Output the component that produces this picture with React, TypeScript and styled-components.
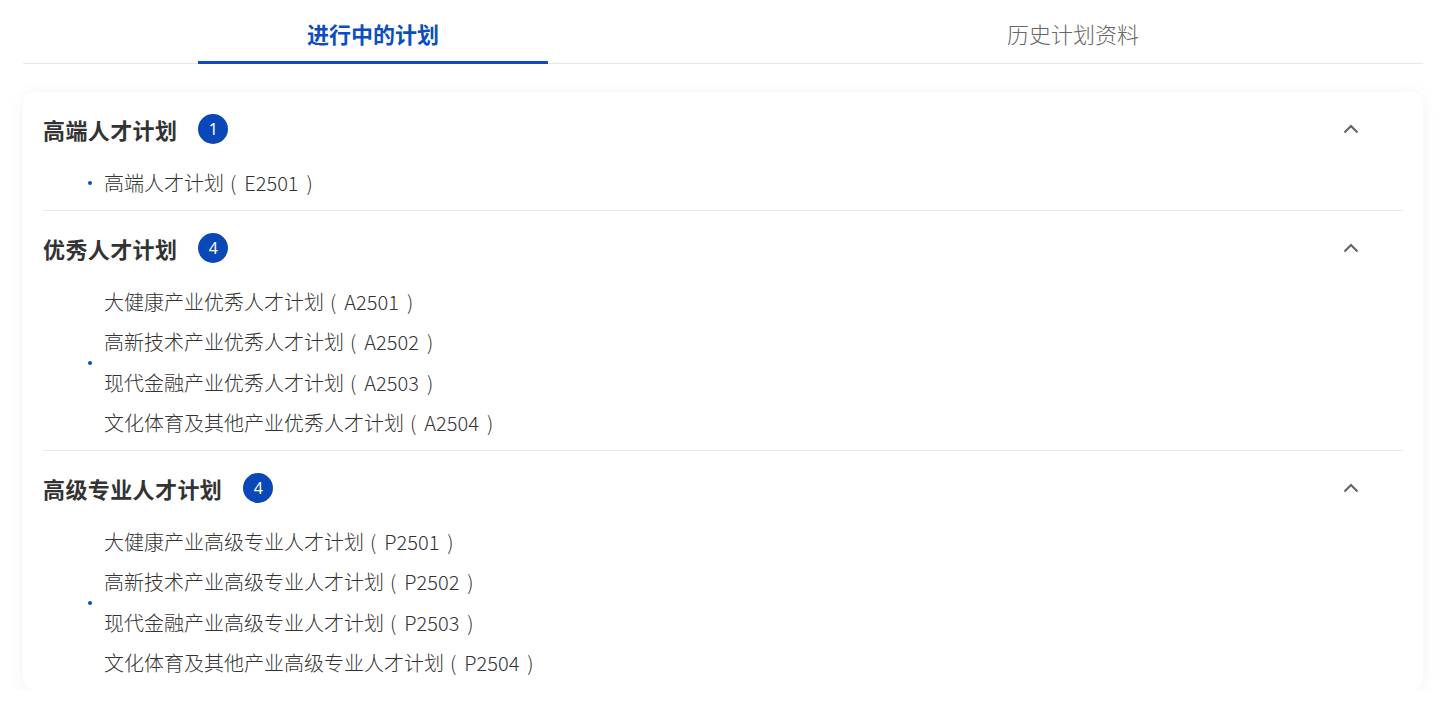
import React, {useState} from 'react';
import styled, {createGlobalStyle} from 'styled-components';

const GlobalStyle = createGlobalStyle`
    html, body {
        margin: 0;
        padding: 0;
        background: #ffffff;
        font-family: "Noto Sans CJK SC", "Noto Sans", sans-serif;
        color: #333333;
    }
`;

interface PlanItem {
    name: string;
    code: string;
}

interface PlanGroup {
    title: string;
    items: PlanItem[];
}

const groups: PlanGroup[] = [
    {title: '高端人才计划', items: [{name: '高端人才计划', code: 'E2501'}]},
    {
        title: '优秀人才计划',
        items: [
            {name: '大健康产业优秀人才计划', code: 'A2501'},
            {name: '高新技术产业优秀人才计划', code: 'A2502'},
            {name: '现代金融产业优秀人才计划', code: 'A2503'},
            {name: '文化体育及其他产业优秀人才计划', code: 'A2504'},
        ],
    },
    {
        title: '高级专业人才计划',
        items: [
            {name: '大健康产业高级专业人才计划', code: 'P2501'},
            {name: '高新技术产业高级专业人才计划', code: 'P2502'},
            {name: '现代金融产业高级专业人才计划', code: 'P2503'},
            {name: '文化体育及其他产业高级专业人才计划', code: 'P2504'},
        ],
    },
];

const Page = styled.div`
    width: 1400px;
    margin-left: 23px;
`;

const TabBar = styled.div`
    display: grid;
    grid-template-columns: 1fr 1fr;
    border-bottom: 1px solid #e6e8eb;
`;

const Tab = styled.button<{ $active?: boolean }>`
    position: relative;
    height: 63px;
    padding: 18px 0 15px;
    border: none;
    background: none;
    cursor: pointer;
    font-family: inherit;
    font-size: 22px;
    line-height: 30px;
    font-weight: ${({$active}) => ($active ? 600 : 300)};
    color: ${({$active}) => ($active ? '#0b4fbf' : '#666666')};

    &::after {
        content: '';
        display: ${({$active}) => ($active ? 'block' : 'none')};
        position: absolute;
        left: 175px;
        right: 175px;
        bottom: -1px;
        height: 3px;
        background: #0b4fbf;
    }
`;

const Card = styled.div`
    margin-top: 28px;
    padding: 0 20px;
    background: #ffffff;
    border-radius: 12px;
    box-shadow: 0 2px 14px rgba(60, 110, 180, 0.09);
`;

const Section = styled.section`
    padding: 17px 0 6px;

    & + & {
        border-top: 1px solid #e6ebf2;
    }
`;

const SectionHeader = styled.div`
    display: flex;
    align-items: center;
    height: 40px;
    cursor: pointer;
`;

const SectionTitle = styled.h3`
    margin: 0;
    font-size: 22px;
    font-weight: 600;
    letter-spacing: 0.4px;
    color: #333333;
`;

const CountBadge = styled.span`
    display: inline-flex;
    align-items: center;
    justify-content: center;
    width: 30px;
    height: 30px;
    margin-left: 21px;
    border-radius: 50%;
    background: #0a48b8;
    color: #ffffff;
    font-size: 16px;
    font-family: "Noto Sans", sans-serif;
`;

const Chevron = styled.span`
    display: flex;
    align-items: center;
    justify-content: center;
    width: 24px;
    margin-left: auto;
    margin-right: 40px;
    color: #666666;
`;

const ItemList = styled.div`
    display: flex;
    align-items: center;
    margin: 14px 0 0 45px;
`;

const Bullet = styled.span`
    width: 4px;
    height: 4px;
    border-radius: 50%;
    background: #0b4fbf;
    margin-right: 12px;
    flex-shrink: 0;
`;

const Items = styled.div`
    display: flex;
    flex-direction: column;
`;

const ItemLink = styled.a`
    font-size: 20px;
    font-weight: 300;
    line-height: 40.5px;
    color: #333333;
    text-decoration: none;
    cursor: pointer;
`;

const Code = styled.span`
    margin-left: 6px;
`;

const CodeText = styled.span`
    padding: 0 8px;
`;

const UpIcon = () => (
    <svg width="16" height="10" viewBox="0 0 16 10" fill="none">
        <path d="M1.5 8.5 L8 2 L14.5 8.5" stroke="currentColor" strokeWidth="2.2"/>
    </svg>
);

export default function App() {
    const [tab, setTab] = useState(0);

    return (
        <Page>
            <GlobalStyle/>
            <TabBar>
                <Tab $active={tab === 0} onClick={() => setTab(0)}>进行中的计划</Tab>
                <Tab $active={tab === 1} onClick={() => setTab(1)}>历史计划资料</Tab>
            </TabBar>
            <Card>
                {groups.map((group) => (
                    <Section key={group.title}>
                        <SectionHeader>
                            <SectionTitle>{group.title}</SectionTitle>
                            <CountBadge>{group.items.length}</CountBadge>
                            <Chevron><UpIcon/></Chevron>
                        </SectionHeader>
                        <ItemList>
                            <Bullet/>
                            <Items>
                                {group.items.map((item) => (
                                    <ItemLink key={item.code}>
                                        {item.name}
                                        <Code>(<CodeText>{item.code}</CodeText>)</Code>
                                    </ItemLink>
                                ))}
                            </Items>
                        </ItemList>
                    </Section>
                ))}
            </Card>
        </Page>
    );
}
